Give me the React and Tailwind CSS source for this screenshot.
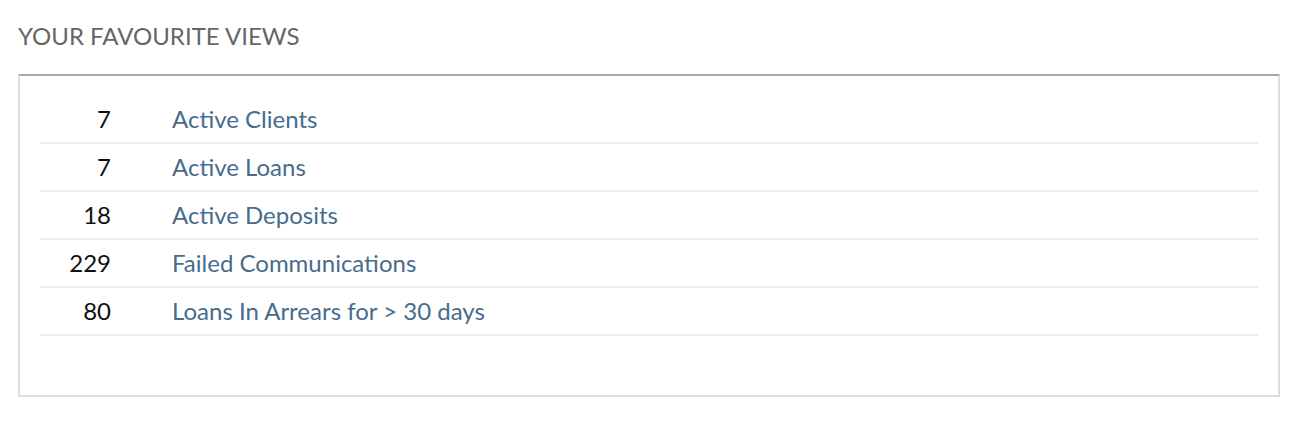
import React from "react";

const rows = [
  { n: "7", label: "Active Clients" },
  { n: "7", label: "Active Loans" },
  { n: "18", label: "Active Deposits" },
  { n: "229", label: "Failed Communications" },
  { n: "80", label: "Loans In Arrears for > 30 days" },
];

export default function App() {
  return (
    <div className="bg-white w-[1314px] h-[428px] px-[18px] pt-[22px]" style={{ fontFamily: "Lato, 'Open Sans', sans-serif" }}>
      <h2 className="text-[24px] leading-[28px] text-[#666666] font-normal">YOUR FAVOURITE VIEWS</h2>
      <div className="mt-[24px] w-[1262px] h-[323px] border-2 border-[#dddddd] border-t-[#a8a8a8] px-[20px] pt-[20px]">
        {rows.map((r) => (
          <div key={r.label} className="flex items-center h-[48px] border-b-2 border-[#ececec]">
            <div className="w-[71px] text-right text-[24px] text-[#111111]">{r.n}</div>
            <div className="pl-[61px] text-[24px] text-[#476c8e]">{r.label}</div>
          </div>
        ))}
      </div>
    </div>
  );
}
